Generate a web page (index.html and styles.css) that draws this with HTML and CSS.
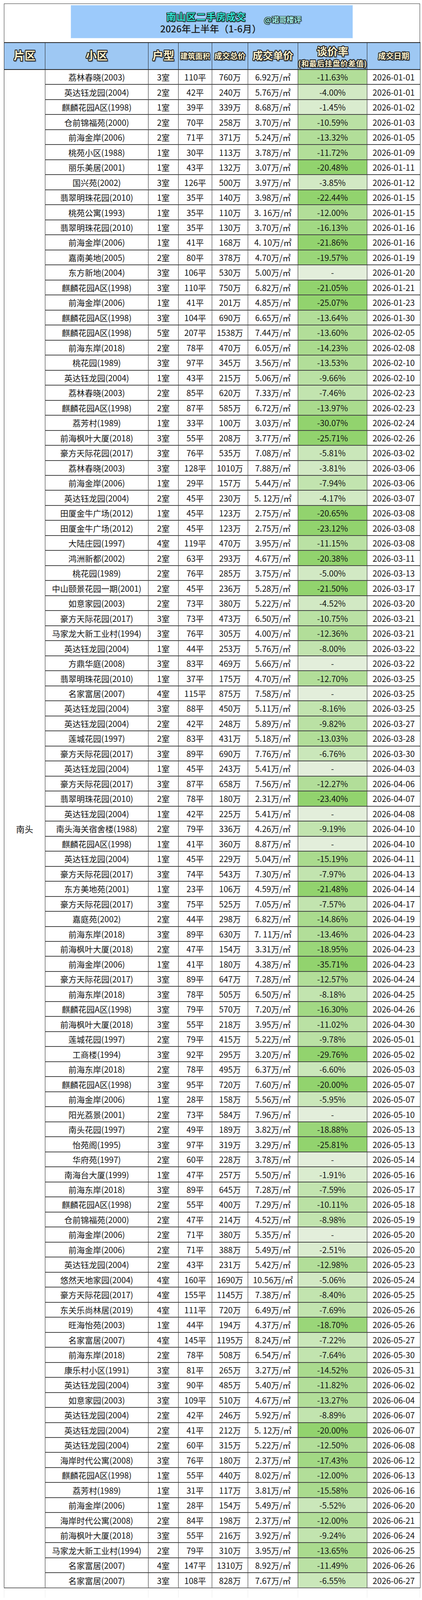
FILE: index.html
```html
<!DOCTYPE html>
<html lang="zh-CN">
<head>
<meta charset="utf-8">
<title>南山区二手房成交 2026年上半年</title>
<link rel="stylesheet" href="styles.css">
</head>
<body>
<div class="sheet">
  <div class="banner">
    <div class="title-box">
      <div class="title-line">
        <span class="title">南山区二手房成交</span>
        <span class="handle">@诺哥楼评</span>
      </div>
      <div class="subtitle">2026年上半年（1-6月）</div>
    </div>
  </div>
  <table class="deals">
    <colgroup>
      <col class="c-area"><col class="c-name"><col class="c-room"><col class="c-size"><col class="c-total"><col class="c-unit"><col class="c-rate"><col class="c-date">
    </colgroup>
    <thead>
      <tr>
        <th><span class="art h-lg">片区</span></th>
        <th><span class="art h-lg">小区</span></th>
        <th><span class="art h-lg">户型</span></th>
        <th><span class="art h-sm">建筑面积</span></th>
        <th><span class="art h-sm2">成交总价</span></th>
        <th><span class="art h-md">成交单价</span></th>
        <th class="rate-head"><span class="art h-md line">谈价率</span><span class="art note line">(和最后挂盘价差值)</span></th>
        <th><span class="art h-sm2">成交日期</span></th>
      </tr>
    </thead>
    <tbody>
<tr><td class="area" rowspan="101">南头</td><td>荔林春晓(2003)</td><td>3室</td><td>110平</td><td>760万</td><td>6.92万/㎡</td><td class="g6">-11.63%</td><td>2026-01-01</td></tr>
<tr><td>英达钰龙园(2004)</td><td>2室</td><td>42平</td><td>240万</td><td>5.76万/㎡</td><td class="g2">-4.00%</td><td>2026-01-01</td></tr>
<tr><td>麒麟花园A区(1998)</td><td>1室</td><td>39平</td><td>339万</td><td>8.68万/㎡</td><td class="g1">-1.45%</td><td>2026-01-02</td></tr>
<tr><td>仓前锦福苑(2000)</td><td>2室</td><td>70平</td><td>258万</td><td>3.70万/㎡</td><td class="g5">-10.59%</td><td>2026-01-03</td></tr>
<tr><td>前海金岸(2006)</td><td>2室</td><td>71平</td><td>371万</td><td>5.24万/㎡</td><td class="g6">-13.32%</td><td>2026-01-05</td></tr>
<tr><td>桃苑小区(1988)</td><td>1室</td><td>30平</td><td>113万</td><td>3.78万/㎡</td><td class="g6">-11.72%</td><td>2026-01-09</td></tr>
<tr><td>丽乐美居(2001)</td><td>1室</td><td>43平</td><td>132万</td><td>3.07万/㎡</td><td class="g10">-20.48%</td><td>2026-01-11</td></tr>
<tr><td>国兴苑(2002)</td><td>3室</td><td>126平</td><td>500万</td><td>3.97万/㎡</td><td class="g2">-3.85%</td><td>2026-01-12</td></tr>
<tr><td>翡翠明珠花园(2010)</td><td>1室</td><td>35平</td><td>140万</td><td>3.98万/㎡</td><td class="g10">-22.44%</td><td>2026-01-15</td></tr>
<tr><td>桃苑公寓(1993)</td><td>1室</td><td>35平</td><td>110万</td><td>3. 16万/㎡</td><td class="g6">-12.00%</td><td>2026-01-15</td></tr>
<tr><td>翡翠明珠花园(2010)</td><td>1室</td><td>35平</td><td>130万</td><td>3.70万/㎡</td><td class="g8">-16.13%</td><td>2026-01-16</td></tr>
<tr><td>前海金岸(2006)</td><td>1室</td><td>41平</td><td>168万</td><td>4. 10万/㎡</td><td class="g10">-21.86%</td><td>2026-01-16</td></tr>
<tr><td>嘉南美地(2005)</td><td>2室</td><td>80平</td><td>378万</td><td>4.70万/㎡</td><td class="g9">-19.57%</td><td>2026-01-19</td></tr>
<tr><td>东方新地(2004)</td><td>3室</td><td>106平</td><td>530万</td><td>5.00万/㎡</td><td class="nil">-</td><td>2026-01-20</td></tr>
<tr><td>麒麟花园A区(1998)</td><td>3室</td><td>110平</td><td>750万</td><td>6.82万/㎡</td><td class="g10">-21.05%</td><td>2026-01-21</td></tr>
<tr><td>前海金岸(2006)</td><td>1室</td><td>41平</td><td>201万</td><td>4.85万/㎡</td><td class="g10">-25.07%</td><td>2026-01-23</td></tr>
<tr><td>麒麟花园A区(1998)</td><td>3室</td><td>104平</td><td>690万</td><td>6.65万/㎡</td><td class="g6">-13.64%</td><td>2026-01-30</td></tr>
<tr><td>麒麟花园A区(1998)</td><td>5室</td><td>207平</td><td>1538万</td><td>7.44万/㎡</td><td class="g6">-13.60%</td><td>2026-02-05</td></tr>
<tr><td>前海东岸(2018)</td><td>2室</td><td>78平</td><td>470万</td><td>6.05万/㎡</td><td class="g7">-14.23%</td><td>2026-02-08</td></tr>
<tr><td>桃花园(1989)</td><td>3室</td><td>97平</td><td>345万</td><td>3.56万/㎡</td><td class="g6">-13.53%</td><td>2026-02-10</td></tr>
<tr><td>英达钰龙园(2004)</td><td>1室</td><td>43平</td><td>215万</td><td>5.06万/㎡</td><td class="g5">-9.66%</td><td>2026-02-10</td></tr>
<tr><td>荔林春晓(2003)</td><td>2室</td><td>85平</td><td>620万</td><td>7.33万/㎡</td><td class="g4">-7.46%</td><td>2026-02-23</td></tr>
<tr><td>麒麟花园A区(1998)</td><td>2室</td><td>87平</td><td>585万</td><td>6.72万/㎡</td><td class="g7">-13.97%</td><td>2026-02-23</td></tr>
<tr><td>荔芳村(1989)</td><td>1室</td><td>33平</td><td>100万</td><td>3.03万/㎡</td><td class="g10">-30.07%</td><td>2026-02-24</td></tr>
<tr><td>前海枫叶大厦(2018)</td><td>3室</td><td>55平</td><td>208万</td><td>3.77万/㎡</td><td class="g10">-25.71%</td><td>2026-02-26</td></tr>
<tr><td>豪方天际花园(2017)</td><td>3室</td><td>76平</td><td>535万</td><td>7.08万/㎡</td><td class="g3">-5.81%</td><td>2026-03-02</td></tr>
<tr><td>荔林春晓(2003)</td><td>3室</td><td>128平</td><td>1010万</td><td>7.88万/㎡</td><td class="g2">-3.81%</td><td>2026-03-06</td></tr>
<tr><td>前海金岸(2006)</td><td>1室</td><td>29平</td><td>157万</td><td>5.44万/㎡</td><td class="g4">-7.94%</td><td>2026-03-06</td></tr>
<tr><td>英达钰龙园(2004)</td><td>2室</td><td>45平</td><td>230万</td><td>5. 12万/㎡</td><td class="g2">-4.17%</td><td>2026-03-07</td></tr>
<tr><td>田厦金牛广场(2012)</td><td>1室</td><td>45平</td><td>123万</td><td>2.75万/㎡</td><td class="g10">-20.65%</td><td>2026-03-08</td></tr>
<tr><td>田厦金牛广场(2012)</td><td>2室</td><td>45平</td><td>123万</td><td>2.75万/㎡</td><td class="g10">-23.12%</td><td>2026-03-08</td></tr>
<tr><td>大陆庄园(1997)</td><td>4室</td><td>119平</td><td>470万</td><td>3.95万/㎡</td><td class="g5">-11.15%</td><td>2026-03-08</td></tr>
<tr><td>鸿洲新都(2002)</td><td>2室</td><td>63平</td><td>293万</td><td>4.67万/㎡</td><td class="g10">-20.38%</td><td>2026-03-11</td></tr>
<tr><td>桃花园(1989)</td><td>2室</td><td>76平</td><td>285万</td><td>3.75万/㎡</td><td class="g2">-5.00%</td><td>2026-03-13</td></tr>
<tr><td>中山颐景花园一期(2001)</td><td>2室</td><td>45平</td><td>236万</td><td>5.28万/㎡</td><td class="g10">-21.50%</td><td>2026-03-17</td></tr>
<tr><td>如意家园(2003)</td><td>2室</td><td>73平</td><td>380万</td><td>5.22万/㎡</td><td class="g2">-4.52%</td><td>2026-03-20</td></tr>
<tr><td>豪方天际花园(2017)</td><td>3室</td><td>73平</td><td>473万</td><td>6.50万/㎡</td><td class="g5">-10.75%</td><td>2026-03-21</td></tr>
<tr><td>马家龙大新工业村(1994)</td><td>3室</td><td>76平</td><td>305万</td><td>4.00万/㎡</td><td class="g6">-12.36%</td><td>2026-03-21</td></tr>
<tr><td>英达钰龙园(2004)</td><td>1室</td><td>44平</td><td>253万</td><td>5.76万/㎡</td><td class="g4">-8.00%</td><td>2026-03-22</td></tr>
<tr><td>方鼎华庭(2008)</td><td>3室</td><td>83平</td><td>469万</td><td>5.66万/㎡</td><td class="nil">-</td><td>2026-03-22</td></tr>
<tr><td>翡翠明珠花园(2010)</td><td>1室</td><td>37平</td><td>175万</td><td>4.70万/㎡</td><td class="g6">-12.70%</td><td>2026-03-25</td></tr>
<tr><td>名家富居(2007)</td><td>4室</td><td>115平</td><td>875万</td><td>7.58万/㎡</td><td class="nil">-</td><td>2026-03-25</td></tr>
<tr><td>英达钰龙园(2004)</td><td>3室</td><td>88平</td><td>450万</td><td>5.11万/㎡</td><td class="g4">-8.16%</td><td>2026-03-25</td></tr>
<tr><td>英达钰龙园(2004)</td><td>2室</td><td>42平</td><td>248万</td><td>5.89万/㎡</td><td class="g5">-9.82%</td><td>2026-03-27</td></tr>
<tr><td>莲城花园(1997)</td><td>2室</td><td>83平</td><td>431万</td><td>5.18万/㎡</td><td class="g6">-13.03%</td><td>2026-03-28</td></tr>
<tr><td>豪方天际花园(2017)</td><td>3室</td><td>89平</td><td>690万</td><td>7.76万/㎡</td><td class="g3">-6.76%</td><td>2026-03-30</td></tr>
<tr><td>英达钰龙园(2004)</td><td>1室</td><td>45平</td><td>243万</td><td>5.41万/㎡</td><td class="nil">-</td><td>2026-04-03</td></tr>
<tr><td>豪方天际花园(2017)</td><td>3室</td><td>87平</td><td>658万</td><td>7.56万/㎡</td><td class="g6">-12.27%</td><td>2026-04-06</td></tr>
<tr><td>翡翠明珠花园(2010)</td><td>2室</td><td>78平</td><td>180万</td><td>2.31万/㎡</td><td class="g10">-23.40%</td><td>2026-04-07</td></tr>
<tr><td>英达钰龙园(2004)</td><td>1室</td><td>42平</td><td>225万</td><td>5.41万/㎡</td><td class="nil">-</td><td>2026-04-08</td></tr>
<tr><td>南头海关宿舍楼(1988)</td><td>2室</td><td>79平</td><td>336万</td><td>4.26万/㎡</td><td class="g4">-9.19%</td><td>2026-04-10</td></tr>
<tr><td>麒麟花园A区(1998)</td><td>1室</td><td>41平</td><td>360万</td><td>8.87万/㎡</td><td class="nil">-</td><td>2026-04-10</td></tr>
<tr><td>英达钰龙园(2004)</td><td>1室</td><td>45平</td><td>229万</td><td>5.04万/㎡</td><td class="g7">-15.19%</td><td>2026-04-11</td></tr>
<tr><td>豪方天际花园(2017)</td><td>3室</td><td>74平</td><td>543万</td><td>7.30万/㎡</td><td class="g4">-7.97%</td><td>2026-04-13</td></tr>
<tr><td>东方美地苑(2001)</td><td>1室</td><td>23平</td><td>106万</td><td>4.59万/㎡</td><td class="g10">-21.48%</td><td>2026-04-14</td></tr>
<tr><td>豪方天际花园(2017)</td><td>3室</td><td>75平</td><td>525万</td><td>7.05万/㎡</td><td class="g4">-7.57%</td><td>2026-04-17</td></tr>
<tr><td>嘉庭苑(2002)</td><td>2室</td><td>44平</td><td>298万</td><td>6.82万/㎡</td><td class="g7">-14.86%</td><td>2026-04-19</td></tr>
<tr><td>前海东岸(2018)</td><td>3室</td><td>89平</td><td>630万</td><td>7. 11万/㎡</td><td class="g6">-13.46%</td><td>2026-04-23</td></tr>
<tr><td>前海枫叶大厦(2018)</td><td>2室</td><td>47平</td><td>154万</td><td>3.31万/㎡</td><td class="g9">-18.95%</td><td>2026-04-23</td></tr>
<tr><td>前海金岸(2006)</td><td>1室</td><td>41平</td><td>180万</td><td>4.38万/㎡</td><td class="g10">-35.71%</td><td>2026-04-23</td></tr>
<tr><td>豪方天际花园(2017)</td><td>3室</td><td>89平</td><td>647万</td><td>7.28万/㎡</td><td class="g6">-12.57%</td><td>2026-04-24</td></tr>
<tr><td>前海东岸(2018)</td><td>3室</td><td>78平</td><td>505万</td><td>6.50万/㎡</td><td class="g4">-8.18%</td><td>2026-04-25</td></tr>
<tr><td>麒麟花园A区(1998)</td><td>3室</td><td>79平</td><td>570万</td><td>7.20万/㎡</td><td class="g8">-16.30%</td><td>2026-04-26</td></tr>
<tr><td>前海枫叶大厦(2018)</td><td>3室</td><td>55平</td><td>218万</td><td>3.95万/㎡</td><td class="g5">-11.02%</td><td>2026-04-30</td></tr>
<tr><td>莲城花园(1997)</td><td>2室</td><td>79平</td><td>415万</td><td>5.22万/㎡</td><td class="g5">-9.78%</td><td>2026-05-01</td></tr>
<tr><td>工商楼(1994)</td><td>3室</td><td>92平</td><td>295万</td><td>3.20万/㎡</td><td class="g10">-29.76%</td><td>2026-05-02</td></tr>
<tr><td>前海东岸(2018)</td><td>2室</td><td>78平</td><td>495万</td><td>6.37万/㎡</td><td class="g3">-6.60%</td><td>2026-05-03</td></tr>
<tr><td>麒麟花园A区(1998)</td><td>3室</td><td>95平</td><td>720万</td><td>7.60万/㎡</td><td class="g10">-20.00%</td><td>2026-05-07</td></tr>
<tr><td>前海金岸(2006)</td><td>1室</td><td>28平</td><td>158万</td><td>5.56万/㎡</td><td class="g3">-5.95%</td><td>2026-05-07</td></tr>
<tr><td>阳光荔景(2001)</td><td>2室</td><td>73平</td><td>584万</td><td>7.96万/㎡</td><td class="nil">-</td><td>2026-05-10</td></tr>
<tr><td>南头花园(1997)</td><td>2室</td><td>49平</td><td>189万</td><td>3.82万/㎡</td><td class="g9">-18.88%</td><td>2026-05-13</td></tr>
<tr><td>怡苑阁(1995)</td><td>3室</td><td>97平</td><td>319万</td><td>3.29万/㎡</td><td class="g10">-25.81%</td><td>2026-05-13</td></tr>
<tr><td>华府苑(1997)</td><td>2室</td><td>60平</td><td>228万</td><td>3.78万/㎡</td><td class="nil">-</td><td>2026-05-14</td></tr>
<tr><td>南海台大厦(1999)</td><td>1室</td><td>47平</td><td>257万</td><td>5.50万/㎡</td><td class="g1">-1.91%</td><td>2026-05-16</td></tr>
<tr><td>前海东岸(2018)</td><td>3室</td><td>89平</td><td>645万</td><td>7.28万/㎡</td><td class="g4">-7.59%</td><td>2026-05-17</td></tr>
<tr><td>麒麟花园A区(1998)</td><td>2室</td><td>55平</td><td>400万</td><td>7.29万/㎡</td><td class="g5">-10.11%</td><td>2026-05-18</td></tr>
<tr><td>仓前锦福苑(2000)</td><td>2室</td><td>47平</td><td>214万</td><td>4.52万/㎡</td><td class="g4">-8.98%</td><td>2026-05-19</td></tr>
<tr><td>前海金岸(2006)</td><td>2室</td><td>71平</td><td>380万</td><td>5.35万/㎡</td><td class="nil">-</td><td>2026-05-20</td></tr>
<tr><td>前海金岸(2006)</td><td>2室</td><td>71平</td><td>388万</td><td>5.49万/㎡</td><td class="g1">-2.51%</td><td>2026-05-20</td></tr>
<tr><td>英达钰龙园(2004)</td><td>2室</td><td>43平</td><td>231万</td><td>5.42万/㎡</td><td class="g6">-12.98%</td><td>2026-05-23</td></tr>
<tr><td>悠然天地家园(2004)</td><td>4室</td><td>160平</td><td>1690万</td><td>10.56万/㎡</td><td class="g2">-5.06%</td><td>2026-05-24</td></tr>
<tr><td>豪方天际花园(2017)</td><td>4室</td><td>155平</td><td>1145万</td><td>7.38万/㎡</td><td class="g4">-8.40%</td><td>2026-05-25</td></tr>
<tr><td>东关乐尚林居(2019)</td><td>4室</td><td>111平</td><td>720万</td><td>6.49万/㎡</td><td class="g4">-7.69%</td><td>2026-05-26</td></tr>
<tr><td>旺海怡苑(2003)</td><td>1室</td><td>44平</td><td>194万</td><td>4.37万/㎡</td><td class="g9">-18.70%</td><td>2026-05-26</td></tr>
<tr><td>名家富居(2007)</td><td>4室</td><td>145平</td><td>1195万</td><td>8.24万/㎡</td><td class="g3">-7.22%</td><td>2026-05-27</td></tr>
<tr><td>前海东岸(2018)</td><td>2室</td><td>78平</td><td>508万</td><td>6.54万/㎡</td><td class="g4">-7.64%</td><td>2026-05-30</td></tr>
<tr><td>康乐村小区(1991)</td><td>3室</td><td>81平</td><td>265万</td><td>3.27万/㎡</td><td class="g7">-14.52%</td><td>2026-05-31</td></tr>
<tr><td>英达钰龙园(2004)</td><td>3室</td><td>90平</td><td>485万</td><td>5.40万/㎡</td><td class="g6">-11.82%</td><td>2026-06-02</td></tr>
<tr><td>如意家园(2003)</td><td>3室</td><td>109平</td><td>510万</td><td>4.67万/㎡</td><td class="g6">-13.27%</td><td>2026-06-04</td></tr>
<tr><td>英达钰龙园(2004)</td><td>2室</td><td>42平</td><td>246万</td><td>5.92万/㎡</td><td class="g4">-8.89%</td><td>2026-06-07</td></tr>
<tr><td>英达钰龙园(2004)</td><td>2室</td><td>41平</td><td>212万</td><td>5. 12万/㎡</td><td class="g10">-20.00%</td><td>2026-06-07</td></tr>
<tr><td>英达钰龙园(2004)</td><td>2室</td><td>60平</td><td>315万</td><td>5.22万/㎡</td><td class="g6">-12.50%</td><td>2026-06-08</td></tr>
<tr><td>海岸时代公寓(2008)</td><td>3室</td><td>76平</td><td>180万</td><td>2.37万/㎡</td><td class="g8">-17.43%</td><td>2026-06-12</td></tr>
<tr><td>麒麟花园A区(1998)</td><td>1室</td><td>55平</td><td>440万</td><td>8.02万/㎡</td><td class="g6">-12.00%</td><td>2026-06-13</td></tr>
<tr><td>荔芳村(1989)</td><td>1室</td><td>31平</td><td>117万</td><td>3.81万/㎡</td><td class="g7">-15.58%</td><td>2026-06-16</td></tr>
<tr><td>前海金岸(2006)</td><td>1室</td><td>28平</td><td>154万</td><td>5.49万/㎡</td><td class="g3">-5.52%</td><td>2026-06-20</td></tr>
<tr><td>海岸时代公寓(2008)</td><td>2室</td><td>84平</td><td>198万</td><td>2.37万/㎡</td><td class="g6">-12.00%</td><td>2026-06-21</td></tr>
<tr><td>前海枫叶大厦(2018)</td><td>3室</td><td>55平</td><td>216万</td><td>3.92万/㎡</td><td class="g4">-9.24%</td><td>2026-06-24</td></tr>
<tr><td>马家龙大新工业村(1994)</td><td>2室</td><td>79平</td><td>310万</td><td>3.95万/㎡</td><td class="g7">-13.65%</td><td>2026-06-25</td></tr>
<tr><td>名家富居(2007)</td><td>4室</td><td>147平</td><td>1310万</td><td>8.92万/㎡</td><td class="g5">-11.49%</td><td>2026-06-26</td></tr>
<tr><td>名家富居(2007)</td><td>3室</td><td>108平</td><td>828万</td><td>7.67万/㎡</td><td class="g3">-6.55%</td><td>2026-06-27</td></tr>
    </tbody>
  </table>
  <div class="tail"><span></span><span></span><span></span><span></span><span></span><span></span><span></span><span></span></div>
</div>
</body>
</html>
```
FILE: styles.css
```css
* { box-sizing: border-box; }

body {
  margin: 0;
  background: #ffffff;
  color: #141414;
  font-family: "Noto Sans CJK SC", "Noto Sans", sans-serif;
}

/* the capture window is 4096px tall, so every vertical size is the
   original sheet's size x 0.876 to keep the whole sheet in view */
.sheet {
  width: 1065px;
  margin: 8.76px 0 0 10px;
}

/* ---------- banner ---------- */
.banner {
  height: 98.98px;
  border: 1px solid #333;
  border-bottom: none;
  padding: 3.38px 0 0 170px;
}

.title-box {
  width: 722px;
  height: 84.97px;
  background: #9ccafb;
  border: 1px solid #c4e0fd;
  padding-top: 14.5px;
}

.title-line {
  display: flex;
  align-items: flex-end;
  height: 26px;
  padding-left: 244px;
}

.title {
  font-size: 24px;
  line-height: 26px;
  font-weight: 700;
  letter-spacing: 1.5px;
  color: #31e3d3;
  text-shadow:
    -1.5px -1.5px 0 #1d2a2a, 1.5px -1.5px 0 #1d2a2a, -1.5px 1.5px 0 #1d2a2a, 1.5px 1.5px 0 #1d2a2a,
    0 -1.5px 0 #1d2a2a, 0 1.5px 0 #1d2a2a, -1.5px 0 0 #1d2a2a, 1.5px 0 0 #1d2a2a,
    2px 2px 2px rgba(0, 0, 0, 0.45);
}

.handle {
  font-size: 19px;
  line-height: 22px;
  font-weight: 700;
  margin-left: 46px;
  margin-bottom: -6.3px;
  color: #a6f3ec;
  text-shadow:
    -1.3px -1.3px 0 #1d2a2a, 1.3px -1.3px 0 #1d2a2a, -1.3px 1.3px 0 #1d2a2a, 1.3px 1.3px 0 #1d2a2a,
    0 -1.3px 0 #1d2a2a, 0 1.3px 0 #1d2a2a, -1.3px 0 0 #1d2a2a, 1.3px 0 0 #1d2a2a,
    2px 2px 2px rgba(0, 0, 0, 0.4);
}

.subtitle {
  margin-top: 5.5px;
  padding-left: 228px;
  font-size: 24px;
  line-height: 26px;
  font-weight: 500;
  color: #1a1a1a;
}

/* ---------- table ---------- */
.deals {
  width: 1065px;
  table-layout: fixed;
  border-collapse: collapse;
}

.c-area { width: 105px; }
.c-name { width: 264px; }
.c-room { width: 77px; }
.c-size { width: 86px; }
.c-total { width: 92px; }
.c-unit { width: 128px; }
.c-rate { width: 177px; }
.c-date { width: 136px; }

.deals thead tr { height: 69.2px; }

.deals th {
  padding: 0;
  background: #9ec8f3;
  border-left: 1px solid #222;
  border-right: 1px solid #222;
  border-top: 2px solid #222;
  border-bottom: 2px solid #222;
  text-align: center;
  vertical-align: middle;
  white-space: nowrap;
  font-weight: 700;
  line-height: 30px;
}

.art {
  color: #fff3cc;
  font-weight: 700;
  text-shadow:
    -1.6px -1.6px 0 #1c1c1c, 1.6px -1.6px 0 #1c1c1c, -1.6px 1.6px 0 #1c1c1c, 1.6px 1.6px 0 #1c1c1c,
    0 -1.8px 0 #1c1c1c, 0 1.8px 0 #1c1c1c, -1.8px 0 0 #1c1c1c, 1.8px 0 0 #1c1c1c,
    2.5px 2.5px 2px rgba(0, 0, 0, 0.45);
}

.h-lg { font-size: 28px; }
.h-md { font-size: 26px; }
.h-sm { font-size: 19px; }
.h-sm2 { font-size: 20px; }

.deals th.rate-head {
  vertical-align: top;
  padding-top: 6px;
}

.line { display: block; }
.rate-head .h-md { font-size: 27px; line-height: 30px; }
.rate-head .note {
  margin-top: 7px;
  font-size: 19px;
  line-height: 18px;
  letter-spacing: 1px;
}

.deals tbody tr { height: 38.49px; }

.deals td {
  padding: 0;
  text-align: center;
  vertical-align: middle;
  white-space: nowrap;
  font-size: 21px;
  line-height: 26px;
  color: #141414;
  border-left: 1px solid #222;
  border-right: 1px solid #222;
  border-top: 2px solid #444;
  border-bottom: 2px solid #444;
}

.deals tbody tr:last-child td { border-bottom: 2px solid #6a6a6a; }

.deals td.area {
  font-size: 22px;
  background: #fff;
  border-bottom: 2px solid #6a6a6a;
}

/* discount-rate colour scale (0% -> light, >= ~21% -> green) */
.g0 { background: #e2efda; }
.g1 { background: #daeccf; }
.g2 { background: #d2e9c4; }
.g3 { background: #cae7ba; }
.g4 { background: #c2e4af; }
.g5 { background: #bae1a4; }
.g6 { background: #b2de99; }
.g7 { background: #aadb8e; }
.g8 { background: #a2d984; }
.g9 { background: #9ad679; }
.g10 { background: #92d36e; }
.nil { background: #e3eedb; }

/* faint spreadsheet grid under the table */
.tail {
  display: grid;
  grid-template-columns: 105px 264px 77px 86px 92px 128px 177px 136px;
  height: 24px;
}

.tail span { border-left: 1px solid #ebebeb; }
.tail span:last-child { border-right: 1px solid #ebebeb; }
```
